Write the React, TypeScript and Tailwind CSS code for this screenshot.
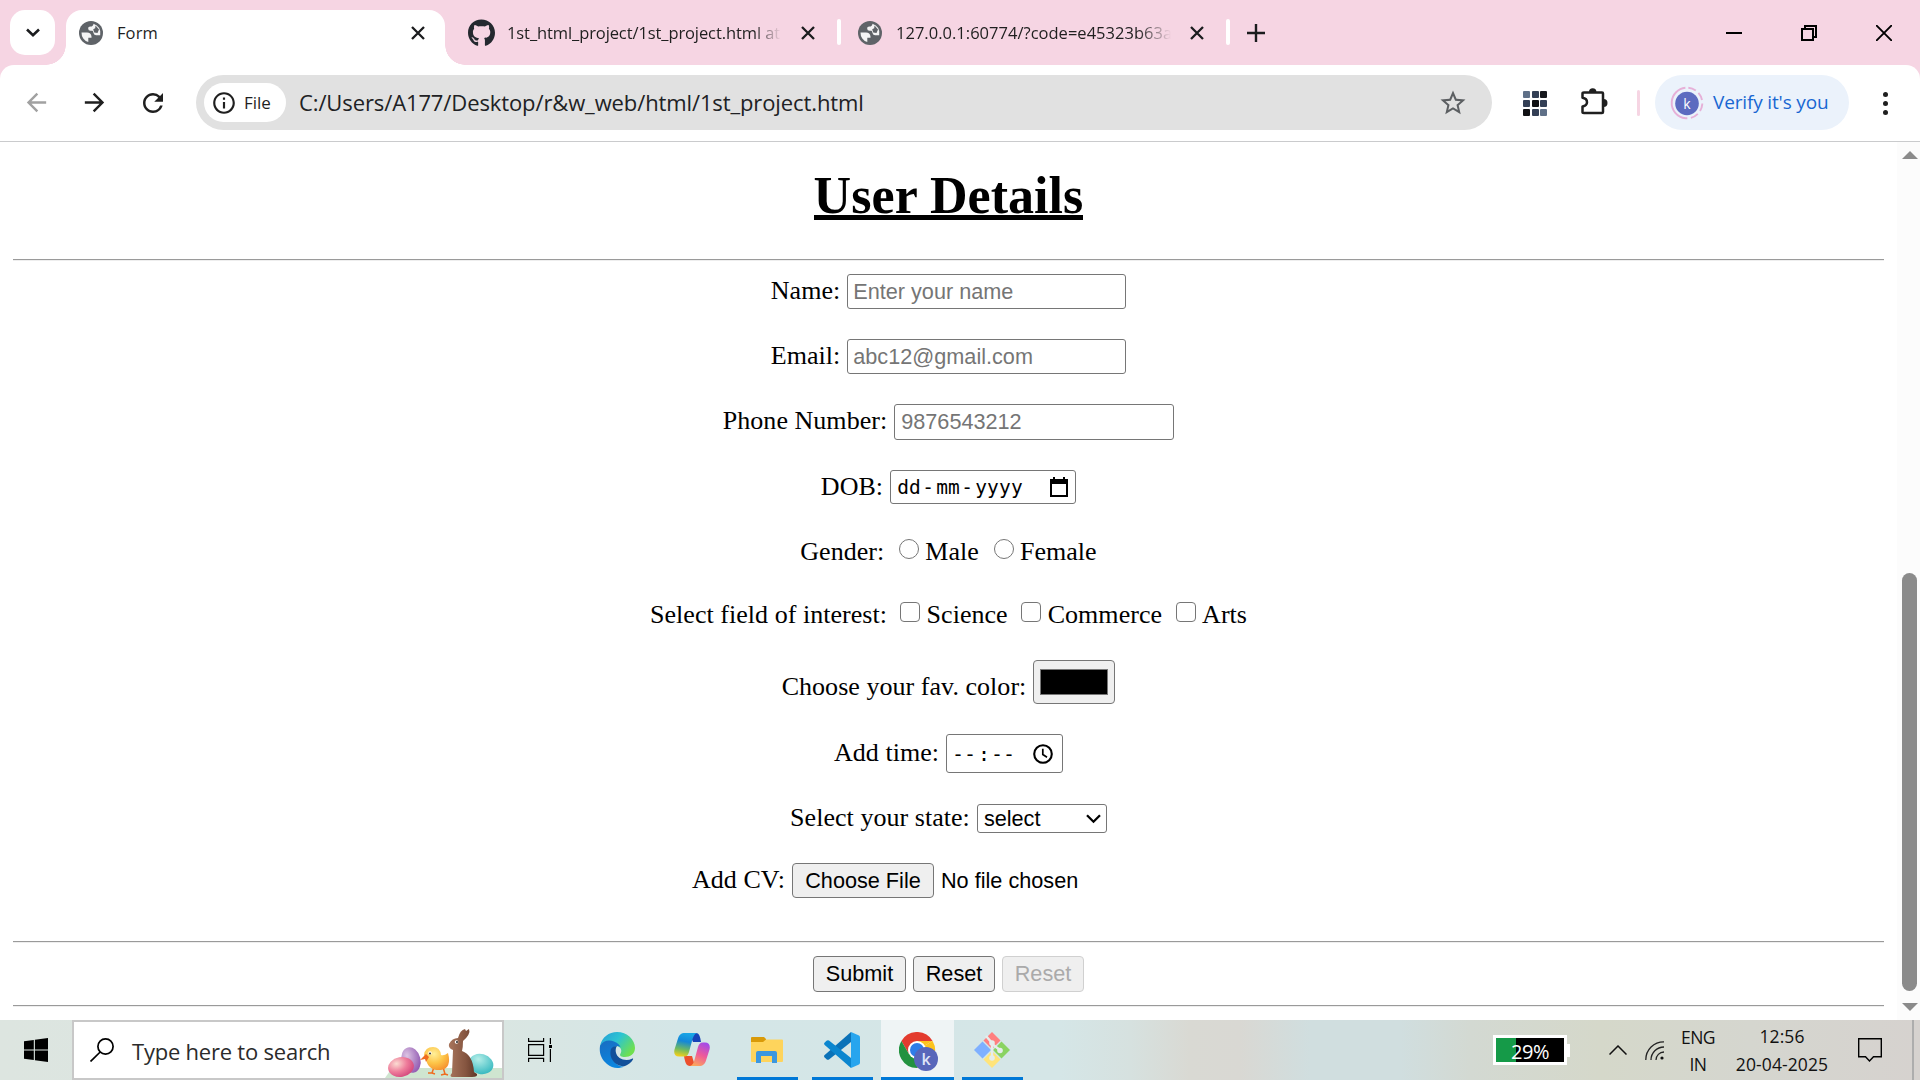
import type { ReactNode } from "react";
import { MdArrowBack, MdArrowForward, MdRefresh, MdStarBorder, MdInfoOutline } from "react-icons/md";
import { FaGithub } from "react-icons/fa";

const ui = "font-['Open_Sans','Noto_Sans',sans-serif] whitespace-nowrap";

function Cross({ className = "" }: { className?: string }) {
  return (
    <svg viewBox="0 0 14 14" className={`h-[14px] w-[14px] shrink-0 ${className}`} stroke="#1b1c1e" strokeWidth="2.3" fill="none">
      <path d="M1 1l12 12M13 1L1 13" />
    </svg>
  );
}

function Globe({ className = "" }: { className?: string }) {
  return (
    <svg viewBox="0 0 24 24" className={`h-[24px] w-[24px] shrink-0 ${className}`}>
      <circle cx="12" cy="12" r="12" fill="#5f6368" />
      <path d="M2.500 11.500H8q4 0 4.500 4v1.200H9.300v4.300A9.600 9.600 0 0 1 2.500 11.500z" fill="#f4f4f5" />
      <path d="M14.500 2.700q-.3 2.800-3 2.800-2.500 0-2.300 2.200.1 2 2.300 2h1.800q.8 0 1.200 2.300.5 2.200 2.700 2.200h4A9.600 9.600 0 0 0 14.500 2.700z" fill="#f4f4f5" />
      <path d="M16.500 4.500l3.500 4-1.500 3.500-3.300-.5-1-3.200 2-1z" fill="#5f6368" />
    </svg>
  );
}

function TabStrip() {
  return (
    <div className="flex h-[65px] bg-[#f6d5e3]">
      <button className="relative z-10 ml-[10px] mt-[10px] flex h-[45px] w-[45px] items-center justify-center rounded-[15px] bg-white">
        <svg viewBox="0 0 14 9" className="h-[9px] w-[14px]" fill="none" stroke="#1b1c1e" strokeWidth="2.6"><path d="M1 1.5l6 5.7 6-5.7" /></svg>
      </button>
      <div className="relative ml-[11px] mt-[10px] flex h-[55px] w-[379px] shrink-0 items-start rounded-t-[16px] bg-white">
        <span className="absolute -left-[20px] bottom-0 h-[20px] w-[20px] bg-[radial-gradient(circle_at_0_0,#f6d5e3_19.5px,#fff_20px)]" />
        <span className="absolute -right-[20px] bottom-0 h-[20px] w-[20px] bg-[radial-gradient(circle_at_100%_0,#f6d5e3_19.5px,#fff_20px)]" />
        <Globe className="ml-[13px] mt-[11px]" />
        <span className={`${ui} ml-[14px] mt-[11px] w-[294px] text-[16.5px] leading-6 tracking-[0.1px] text-[#1f1f1f]`}>Form</span>
        <Cross className="mt-[16px]" />
      </div>
      <FaGithub className="ml-[23px] mt-[19px] h-[28px] w-[27px] shrink-0 text-[#24292f]" />
      <div className={`${ui} ml-[12px] mt-[21px] h-7 w-[274px] shrink-0 overflow-hidden text-[16.5px] leading-6 tracking-[-0.1px] text-[#1f1f1f] [mask-image:linear-gradient(to_right,#000_90%,transparent)]`}>1st_html_project/1st_project.html at</div>
      <Cross className="ml-[20px] mt-[26px]" />
      <span className="ml-[22px] mt-[19px] h-[26px] w-[4px] rounded-sm bg-white" />
      <Globe className="ml-[17px] mt-[21px]" />
      <div className={`${ui} ml-[14px] mt-[21px] h-7 w-[275px] shrink-0 overflow-hidden text-[16.5px] leading-6 tracking-[0.02px] text-[#1f1f1f] [mask-image:linear-gradient(to_right,#000_88%,transparent)]`}>127.0.0.1:60774/?code=e45323b63a</div>
      <Cross className="ml-[19px] mt-[26px]" />
      <span className="ml-[22px] mt-[19px] h-[26px] w-[4px] rounded-sm bg-white" />
      <svg viewBox="0 0 18 18" className="ml-[17px] mt-[24px] h-[18px] w-[18px]" stroke="#1b1c1e" strokeWidth="2.4"><path d="M9 0v18M0 9h18" /></svg>
      <div className="ml-auto flex pr-[28px] pt-[25px]">
        <svg viewBox="0 0 16 16" className="mr-[59px] h-4 w-4" stroke="#000" strokeWidth="2"><path d="M0 8h16" /></svg>
        <svg viewBox="0 0 16 16" className="mr-[59px] h-4 w-4" stroke="#000" strokeWidth="2" fill="none"><path d="M1 4h11v11H1zM4 4V1h11v11h-3" /></svg>
        <svg viewBox="0 0 16 16" className="h-4 w-4" stroke="#000" strokeWidth="1.9"><path d="M0 0l16 16M16 0L0 16" /></svg>
      </div>
    </div>
  );
}

const gridColors = ["#5f7088", "#333f55", "#16181d", "#333f55", "#101114", "#333f55", "#101114", "#333f55", "#5f7088"];

function Toolbar() {
  return (
    <div className="bg-[#f6d5e3]">
      <div className="flex h-[77px] items-start rounded-t-[14px] border-b border-[#cacbcd] bg-white">
        <MdArrowBack className="ml-[22px] mt-[23px] h-[29px] w-[29px] text-[#a1a1a1]" />
        <MdArrowForward className="ml-[29px] mt-[23px] h-[29px] w-[29px] text-[#1f1f1f]" />
        <MdRefresh className="ml-[29px] mt-[23px] h-[30px] w-[30px] text-[#1f1f1f]" />
        <div className="ml-[28px] mt-[10px] flex h-[55px] w-[1296px] items-center rounded-full bg-[#e1e1e1]">
          <div className="ml-[8px] flex h-[39px] w-[82px] items-center rounded-full bg-white">
            <MdInfoOutline className="ml-[7px] h-[26px] w-[26px] text-[#1f1f1f]" />
            <span className={`${ui} ml-[7px] text-[17px] font-medium text-[#1f1f1f]`}>File</span>
          </div>
          <span className={`${ui} ml-[13px] text-[22px] tracking-[-0.11px] text-[#202124]`}>C:/Users/A177/Desktop/r&amp;w_web/html/1st_project.html</span>
          <MdStarBorder className="ml-auto mr-[24px] h-[30px] w-[30px] text-[#5c5f62]" />
        </div>
        <div className="ml-[31px] mt-[26px] grid grid-cols-3 gap-x-[1.5px] gap-y-[2px]">
          {gridColors.map((c, i) => (
            <span key={i} className="h-[7px] w-[7px] rounded-[1px]" style={{ background: c }} />
          ))}
        </div>
        <svg viewBox="0 0 28 28" className="ml-[33px] mt-[22px] h-[28px] w-[28px]">
          <path d="M4 5.5h18q1 0 1 1v18.5q0 1-1 1H4q-1.500 0-1.500-1v-5.500q4.500-.8 4.500-4.200 0-3.800-4.500-4.500V6.500q0-1 1.500-1z" fill="none" stroke="#1f1f1f" strokeWidth="2.500" strokeLinejoin="round" />
          <path d="M9 5a3.700 3.700 0 0 1 7.400 0zM23.500 12a3.500 3.500 0 0 1 0 8z" fill="#1f1f1f" />
        </svg>
        <span className="ml-[29px] mt-[25px] h-[26px] w-[3px] rounded bg-[#f6d5e3]" />
        <div className="ml-[15px] mt-[10px] flex h-[55px] w-[194px] items-center rounded-full bg-[#ebf2fb]">
          <svg viewBox="0 0 34 34" className="ml-[15px] h-[34px] w-[34px]">
            <circle cx="17" cy="17" r="15.300" fill="none" stroke="#e6b0d8" strokeWidth="1.900" strokeDasharray="8 3.500 8 3.500 8 3.500 8 3.500 46.500 3.600" transform="rotate(-85 17 17)" />
            <circle cx="17" cy="17.500" r="11.800" fill="#5c6bc0" />
            <text x="17" y="22.500" textAnchor="middle" fontSize="14" fill="#fff" fontFamily="Open Sans">k</text>
          </svg>
          <span className={`${ui} ml-[9px] text-[19px] tracking-[-0.15px] text-[#1967d2]`}>Verify it's you</span>
        </div>
        <div className="ml-[34px] mt-[27px] flex flex-col gap-[4px]">
          <span className="h-[5px] w-[5px] rounded-full bg-[#1f1f1f]" />
          <span className="h-[5px] w-[5px] rounded-full bg-[#1f1f1f]" />
          <span className="h-[5px] w-[5px] rounded-full bg-[#1f1f1f]" />
        </div>
      </div>
    </div>
  );
}

function Row({ className, children }: { className: string; children: ReactNode }) {
  return <div className={`flex items-start justify-center whitespace-nowrap ${className}`}>{children}</div>;
}

const label = "leading-[30px] tracking-[0.04px]";
const field = "rounded-[3px] border border-[#767676] bg-white font-['Liberation_Sans',Arial,sans-serif] text-[21.67px]";
const box = "border-[1.5px] border-[#767676] bg-white";
const btn = "rounded-[4px] border-[1.5px] border-[#767676] bg-[#efefef] text-center font-['Liberation_Sans',Arial,sans-serif] text-[21.67px] text-black";
const mono = "font-['DejaVu_Sans_Mono',monospace]";

function Rule() {
  return <hr className="mx-[13px] h-[2px] border-0 border-t border-[#9a9a9a] bg-[#eeeeee]" />;
}

function FormPage() {
  return (
    <main className="min-w-0 flex-1 font-['Liberation_Serif','Times_New_Roman',serif] text-[26px] text-black">
      <h1 className="flex h-[117px] justify-center pt-[25px] text-[52px] font-bold leading-[58px] tracking-[0.06px]">
        <span className="h-[53px] border-b-[5px] border-black">User Details</span>
      </h1>
      <Rule />
      <Row className="mt-[13px] h-[65px]">
        <span className={`${label} mt-[2px]`}>Name:</span>
        <input className={`${field} ml-[7px] h-[35px] w-[279px] px-[5px] placeholder:text-[#757575]`} placeholder="Enter your name" />
      </Row>
      <Row className="h-[65px]">
        <span className={`${label} mt-[2px]`}>Email:</span>
        <input className={`${field} ml-[7px] h-[35px] w-[279px] px-[5px] placeholder:text-[#757575]`} placeholder="abc12@gmail.com" />
      </Row>
      <Row className="h-[66px]">
        <span className={`${label} mt-[2px]`}>Phone Number:</span>
        <input className={`${field} ml-[7px] h-[36px] w-[280px] px-[6px] placeholder:text-[#757575]`} placeholder="9876543212" />
      </Row>
      <Row className="h-[65px]">
        <span className={`${label} mt-[2px]`}>DOB:</span>
        <div className={`${field} ml-[7px] flex h-[34px] w-[186px] items-center`}>
          <span className={`${mono} ml-[6px] mt-px flex text-[19.5px] leading-none`}>
            <span className="w-[25px]">dd</span><span className="w-[14px]">-</span><span className="w-[25px]">mm</span><span className="w-[14px]">-</span><span className="tracking-[0.2px]">yyyy</span>
          </span>
          <svg viewBox="0 0 18 20" className="ml-auto mr-[7px] h-[20px] w-[18px]"><path d="M0 2h3V0h2v2h8V0h2v2h3v18H0zM2 7v11h14V7z" fill="#000" fillRule="evenodd" /></svg>
        </div>
      </Row>
      <Row className="h-[63px]">
        <span className={`${label} mt-[2px]`}>Gender:</span>
        <span className={`${box} ml-[15px] mt-[4px] h-[20px] w-[20px] rounded-full`} />
        <span className={`${label} ml-[6px] mt-[2px]`}>Male</span>
        <span className={`${box} ml-[15px] mt-[4px] h-[20px] w-[20px] rounded-full`} />
        <span className={`${label} ml-[6px] mt-[2px]`}>Female</span>
      </Row>
      <Row className="h-[62px]">
        <span className={`${label} mt-[2px]`}>Select field of interest:</span>
        <span className={`${box} ml-[13px] mt-[4px] h-[20px] w-[20px] rounded-[4px]`} />
        <span className={`${label} ml-[6.5px] mt-[2px]`}>Science</span>
        <span className={`${box} ml-[13.5px] mt-[4px] h-[20px] w-[20px] rounded-[4px]`} />
        <span className={`${label} ml-[6.5px] mt-[2px]`}>Commerce</span>
        <span className={`${box} ml-[13.5px] mt-[4px] h-[20px] w-[20px] rounded-[4px]`} />
        <span className={`${label} ml-[6.5px] mt-[2px]`}>Arts</span>
      </Row>
      <Row className="h-[74px]">
        <span className={`${label} mt-[12px]`}>Choose your fav. color:</span>
        <div className="ml-[7px] h-[44px] w-[82px] rounded-[4px] border-[1.5px] border-[#767676] bg-[#efefef] px-[6px] py-[8px]">
          <div className="h-full border border-[#777] bg-black" />
        </div>
      </Row>
      <Row className="h-[68px]">
        <span className={`${label} mt-[4px]`}>Add time:</span>
        <div className={`${field} ml-[7px] flex h-[39px] w-[117px] items-center`}>
          <span className={`${mono} ml-[5px] mt-px flex text-[20px] leading-none`}>
            <span className="w-[26px]">--</span><span className="w-[13px]">:</span><span>--</span>
          </span>
          <svg viewBox="0 0 20 20" className="ml-auto mr-[9px] h-[20px] w-[20px]" fill="none" stroke="#000"><circle cx="10" cy="10" r="8.800" strokeWidth="2.100" /><path d="M9.800 4.800v5.700l4.200 2.700" strokeWidth="1.700" /></svg>
        </div>
      </Row>
      <Row className="h-[61px]">
        <span className={`${label} mt-px`}>Select your state:</span>
        <div className={`${field} ml-[7px] mt-[2px] flex h-[29px] w-[130px] items-center`}>
          <span className="ml-[6px] mt-px">select</span>
          <svg viewBox="0 0 15 10" className="ml-auto mr-[5px] h-[10px] w-[15px]" fill="none" stroke="#000" strokeWidth="2.300"><path d="M1 1.200l6.500 6.500L14 1.200" /></svg>
        </div>
      </Row>
      <Row className="h-[78px]">
        <span className={`${label} mt-[2px]`}>Add CV:</span>
        <button className={`${btn} ml-[7px] h-[35px] w-[142px] leading-[31px]`}>Choose File</button>
        <span className="ml-[7px] w-[264px] font-['Liberation_Sans',Arial,sans-serif] text-[21.67px] leading-[35px]">No file chosen</span>
      </Row>
      <Rule />
      <Row className="mt-[13px] h-[49px] gap-[7px]">
        <button className={`${btn} h-[36px] w-[93px] leading-[32px]`}>Submit</button>
        <button className={`${btn} h-[36px] w-[82px] leading-[32px]`}>Reset</button>
        <button disabled className="h-[36px] w-[82px] rounded-[4px] border-[1.5px] border-[#d0d0d0] bg-[#efefef] text-center font-['Liberation_Sans',Arial,sans-serif] text-[21.67px] leading-[32px] text-[#aaaaaa]">Reset</button>
      </Row>
      <Rule />
    </main>
  );
}

function Scrollbar() {
  return (
    <div className="flex w-[23px] shrink-0 flex-col items-center bg-[#fcfcfc] pl-[2px]">
      <svg viewBox="0 0 16 8" className="mt-[9px] h-[8px] w-[16px]"><path d="M0 8L8 0l8 8z" fill="#8b8b8b" /></svg>
      <span className="mt-[414px] h-[418px] w-[15px] rounded-full bg-[#8b8b8b]" />
      <svg viewBox="0 0 16 8" className="mt-[12px] h-[8px] w-[16px]"><path d="M0 0l8 8 8-8z" fill="#8b8b8b" /></svg>
    </div>
  );
}

function EasterArt() {
  return (
    <svg viewBox="384 1020 118 58" className="ml-auto h-[58px] w-[118px] self-end">
      <defs>
        <radialGradient id="pk" cx=".35" cy=".3" r=".8"><stop offset="0" stopColor="#fbdcd2" /><stop offset=".5" stopColor="#ee7d9b" /><stop offset="1" stopColor="#cf3f78" /></radialGradient>
        <radialGradient id="pu" cx=".35" cy=".3" r=".8"><stop offset="0" stopColor="#dcc4e3" /><stop offset="1" stopColor="#8c52ae" /></radialGradient>
        <radialGradient id="te" cx=".35" cy=".3" r=".8"><stop offset="0" stopColor="#b5eee8" /><stop offset="1" stopColor="#2db5bd" /></radialGradient>
        <radialGradient id="ye" cx=".4" cy=".3" r=".8"><stop offset="0" stopColor="#fff09a" /><stop offset=".5" stopColor="#fdc548" /><stop offset="1" stopColor="#f58a2a" /></radialGradient>
        <linearGradient id="br"><stop offset="0" stopColor="#a8755c" /><stop offset=".6" stopColor="#855540" /><stop offset="1" stopColor="#5d3627" /></linearGradient>
      </defs>
      <path d="M385 1078l7-10h110v10z" fill="#cfe5d0" />
      <ellipse cx="411" cy="1060" rx="9.500" ry="13" transform="rotate(-14 411 1060)" fill="url(#pu)" />
      <ellipse cx="401" cy="1067" rx="13" ry="10" transform="rotate(-10 401 1067)" fill="url(#pk)" />
      <ellipse cx="481" cy="1064" rx="12.500" ry="10" transform="rotate(15 481 1064)" fill="url(#te)" />
      <path d="M434 1067l-2 6-4 0M443 1067l2 7-4 1M432 1073l3 1M445 1074l3 1" stroke="#ef6c1f" strokeWidth="1.500" fill="none" />
      <path d="M424 1055q1-8 9-8 7 0 8 8 3 1 7-2 4 15-7 17-13 1-15-11z" fill="url(#ye)" />
      <path d="M426 1054l-6 6 5-1 1 3 3-5z" fill="#ef6c1f" />
      <circle cx="430" cy="1053" r="1.700" fill="#fff" /><circle cx="430" cy="1053.400" r="1" fill="#333" />
      <path d="M449 1044q3-6 9-6 2-8 7-9l1 2 3-2q2 5-6 12 0 6-1 10 11 4 12 21l3 2q1 3-5 3h-20q-3-1 0-4l1-23q-5-2-4-6z" fill="url(#br)" />
      <circle cx="456.500" cy="1042" r="1.800" fill="#fff" /><circle cx="457" cy="1042" r="1" fill="#222" />
    </svg>
  );
}

function EdgeIcon() {
  return (
    <svg viewBox="0 0 36 36" className="h-[36px] w-[36px]">
      <defs>
        <linearGradient id="e1" x1="0" y1="0" x2="1" y2=".6"><stop offset="0" stopColor="#249bd8" /><stop offset=".5" stopColor="#2cc4d2" /><stop offset="1" stopColor="#6fe04f" /></linearGradient>
        <linearGradient id="e2" x1="0" y1="0" x2=".4" y2="1"><stop offset="0" stopColor="#1a6cc0" /><stop offset="1" stopColor="#0a86e0" /></linearGradient>
      </defs>
      <path d="M1 14C3 5 10 0 18 0c10 0 18 7.500 18 16 0 6-5 9-10 9-4 0-5.500-1.300-4.700-3C24 18 21 14 17 14z" fill="url(#e1)" />
      <path d="M1 14C4 8.500 10 7.500 15 9.500c4 1.600 6 4 6.500 5.500C17 12 12 16 12.500 22c.6 7 6 13 12.500 12.500C20 37 13 36.500 8 32 2 27 0 21 1 14z" fill="url(#e2)" />
      <path d="M12 17c-3 10 6 18.500 14 17 3.500-1.200 6.500-4 8-6.500.4-.8-.2-1.200-1-.8-6 3-15 .5-16.200-6.700-.4-2.500.2-5 1.200-6-2.500 0-5 1-6 3z" fill="#12509a" />
    </svg>
  );
}

function CopilotIcon() {
  return (
    <svg viewBox="0 0 36 33" className="h-[33px] w-[36px]">
      <defs>
        <linearGradient id="c1" x1=".5" y1="0" x2=".3" y2="1"><stop offset="0" stopColor="#19a6e6" /><stop offset=".35" stopColor="#1487d8" /><stop offset=".7" stopColor="#6fba60" /><stop offset="1" stopColor="#f3cf1a" /></linearGradient>
        <linearGradient id="c2" x1=".7" y1="0" x2=".3" y2="1"><stop offset="0" stopColor="#a44be8" /><stop offset=".5" stopColor="#ee5a9a" /><stop offset="1" stopColor="#fba55c" /></linearGradient>
      </defs>
      <path d="M15 0h7c3 0 4 3 5 9h-8z" fill="#1743b8" />
      <path d="M10 23h8l3 10h-5c-4 0-5-4-6-10z" fill="#ec4f2c" />
      <path d="M11 0h12c-3 1-4 4-5 8l-3 11c-1 3-2 4.500-5 4.500H5c-4 0-5.500-3-4.500-7L4 5.500C5 2 7 0 11 0z" fill="url(#c1)" />
      <path d="M25 33H16c3-1 4-4 5-8l3-11c1-3 2-4.500 5-4.500h2c4 0 5.500 3 4.500 7L32 27.500C31 31 29 33 25 33z" fill="url(#c2)" />
    </svg>
  );
}

function ExplorerIcon() {
  return (
    <svg viewBox="0 0 32 27" className="h-[27px] w-[32px]">
      <path d="M0 1q0-1 1-1h12l2 2v3H0z" fill="#d99a09" />
      <path d="M0 5h12l3-2.500h16q1 0 1 1V24q0 1-1 1H1q-1 0-1-1z" fill="#fed45c" />
      <path d="M5 26V16q0-2 2-2h17q2 0 2 2v10h-5v-7H10v7z" fill="#3b97df" />
    </svg>
  );
}

function VsCodeIcon() {
  return (
    <svg viewBox="0 0 36 36" className="h-[36px] w-[36px]">
      <path d="M27 0v10L5 27.500q-1.300.8-2.500-.2l-2-2q-1-1.200.2-2.300z" fill="#0a72b8" />
      <path d="M27 36V26L5 8.500q-1.300-.8-2.500.2l-2 2q-1 1.200.2 2.300z" fill="#0b86cf" />
      <path d="M27 0l8 3.500q1 .5 1 2v25q0 1.500-1 2L27 36z" fill="#27a5ee" />
    </svg>
  );
}

function ChromeIcon() {
  return (
    <svg viewBox="0 0 40 40" className="h-[40px] w-[40px]">
      <path d="M18 18L33.600 9A18 18 0 0 1 18 36z" fill="#fcc31e" />
      <path d="M2.400 9L10 22l8-4V9h15.600A18 18 0 0 0 2.400 9z" fill="#e33b2e" />
      <path d="M18 9h15.600L18 18z" fill="#fcc31e" />
      <path d="M2.400 9A18 18 0 0 0 18 36l7-12-15-2z" fill="#23923f" />
      <circle cx="18" cy="18" r="9" fill="#fff" />
      <circle cx="18" cy="18" r="7" fill="#2f7de8" />
      <circle cx="27" cy="27" r="12" fill="#5866ba" />
      <text x="27" y="33" textAnchor="middle" fontSize="16" fontWeight="600" fill="#dfe3f8" fontFamily="Open Sans">k</text>
    </svg>
  );
}

function GitIcon() {
  return (
    <svg viewBox="0 0 36 36" className="h-[36px] w-[36px]">
      <path d="M18 0l8.500 8.500L18 17 9.500 8.500z" fill="#ff7f7f" />
      <path d="M27.500 9.500L36 18l-8.500 8.500L19 18z" fill="#8ad362" />
      <path d="M8.500 9.500L17 18l-8.500 8.500L0 18z" fill="#7fb0ff" />
      <path d="M18 19l8.500 8.500L18 36l-8.500-8.500z" fill="#ffe47a" />
      <path d="M12 4l6 7v15M18 12l8 6" stroke="#e6edec" strokeWidth="2.400" fill="none" />
      <circle cx="18" cy="11" r="2.800" fill="#e6edec" /><circle cx="26" cy="18.500" r="2.800" fill="#e6edec" /><circle cx="18" cy="26" r="2.800" fill="#e6edec" />
    </svg>
  );
}

function TaskApp({ className, children }: { className: string; children: ReactNode }) {
  return <div className={`flex h-full shrink-0 justify-center ${className}`}>{children}</div>;
}

function Taskbar() {
  return (
    <footer className="flex h-[60px] items-start bg-[linear-gradient(to_right,#dde5e0_0,#dae6e2_500px,#d4e6e7_680px,#d5e6e7_1060px,#d6e1df_1130px,#d9d9d3_1190px,#d9d8d3_1240px,#d0dedf_1310px,#d0dedf_1400px,#d3d9d2_1470px,#d5d8ca_1600px,#d5d6cf_1750px,#d6d2cf_1920px)]">
      <svg viewBox="0 0 24 24" className="ml-[24px] mt-[18px] h-[24px] w-[24px]"><path d="M0 3.300L9.800 2v9.500H0zM10.900 1.800L24 0v11.500H10.900zM0 12.500h9.800V22L0 20.700zM10.900 12.500H24V24l-13.100-1.800z" /></svg>
      <div className="ml-[24px] flex h-[60px] w-[432px] items-center border-2 border-[#c8c8c8] bg-white">
        <svg viewBox="0 0 24 24" className="ml-[16px] h-[24px] w-[24px]" fill="none" stroke="#000" strokeWidth="1.700"><circle cx="15.500" cy="8.500" r="7.600" /><path d="M10.200 14L.5 23.500" /></svg>
        <span className={`${ui} ml-[18px] pt-[3px] text-[22px] tracking-[-0.22px] text-[#2b2b2b]`}>Type here to search</span>
        <EasterArt />
      </div>
      <svg viewBox="0 0 24 24" className="ml-[24px] mt-[18px] h-[24px] w-[24px]" fill="none" stroke="#000" strokeWidth="1.200"><path d="M.6 0v3.400h15V0M.6 6.600h15v10.800H.6zM.6 24v-3.700h15V24M22.400 0v6M22.400 11v13" /><path d="M21 7h3v3h-3z" fill="#000" stroke="none" /></svg>
      <TaskApp className="ml-[47px] w-[36px] pt-[12px]"><EdgeIcon /></TaskApp>
      <TaskApp className="ml-[39px] w-[36px] pt-[13px]"><CopilotIcon /></TaskApp>
      <TaskApp className="ml-[27px] w-[61px] border-b-[3px] border-[#0078d7] pr-px pt-[17px]"><ExplorerIcon /></TaskApp>
      <TaskApp className="ml-[14px] w-[61px] border-b-[3px] border-[#0078d7] pr-px pt-[12px]"><VsCodeIcon /></TaskApp>
      <TaskApp className="ml-[8px] w-[73px] border-b-[3px] border-[#0078d7] bg-[#eff4f5] pl-[3px] pt-[12px]"><ChromeIcon /></TaskApp>
      <TaskApp className="ml-[8px] w-[61px] border-b-[3px] border-[#0078d7] pr-px pt-[12px]"><GitIcon /></TaskApp>
      <div className="ml-auto flex h-full shrink-0 items-start">
        <div className="mt-[15px] flex h-[30px] w-[74px] items-center justify-center border-[3px] border-white bg-[linear-gradient(to_right,#159a48_30%,#000_30%)]">
          <span className={`${ui} pt-[3px] text-[20px] tracking-[-0.4px] text-white`}>29%</span>
        </div>
        <span className="mt-[24px] h-[13px] w-[3px] bg-white" />
        <svg viewBox="0 0 18 10" className="ml-[39px] mt-[25px] h-[10px] w-[18px]" fill="none" stroke="#111" strokeWidth="1.500"><path d="M.5 9.500L9 1l8.500 8.500" /></svg>
        <svg viewBox="0 0 19 19" className="ml-[18px] mt-[21px] h-[19px] w-[19px]" fill="none" stroke="#222" strokeWidth="1.300"><path d="M.8 19A18 18 0 0 1 19 .8M6 19A13 13 0 0 1 19 6M11 19a8 8 0 0 1 8-8" /><circle cx="17" cy="17" r="1.600" fill="#111" stroke="none" /></svg>
        <div className={`${ui} ml-[14px] mt-[4px] w-[40px] text-center text-[17.5px] leading-[27px] tracking-[-0.5px] text-[#111]`}><div>ENG</div><div>IN</div></div>
        <div className={`${ui} ml-[13px] mt-[2px] w-[102px] text-center text-[17.5px] leading-[28px] tracking-[0.1px] text-[#111]`}><div>12:56</div><div>20-04-2025</div></div>
        <svg viewBox="0 0 24 24" className="ml-[25px] mt-[18px] h-[24px] w-[24px]" fill="none" stroke="#000" strokeWidth="1.400"><path d="M.7.700h22.600v18H15.500L11.500 23 7.500 18.700H.7z" /></svg>
        <span className="ml-[30px] mr-[6px] h-[60px] w-[2px] bg-[#adadad]" />
      </div>
    </footer>
  );
}

export default function App() {
  return (
    <div className="flex h-[1080px] w-[1920px] flex-col overflow-hidden bg-white">
      <TabStrip />
      <Toolbar />
      <div className="flex h-[878px] overflow-hidden">
        <FormPage />
        <Scrollbar />
      </div>
      <Taskbar />
    </div>
  );
}
